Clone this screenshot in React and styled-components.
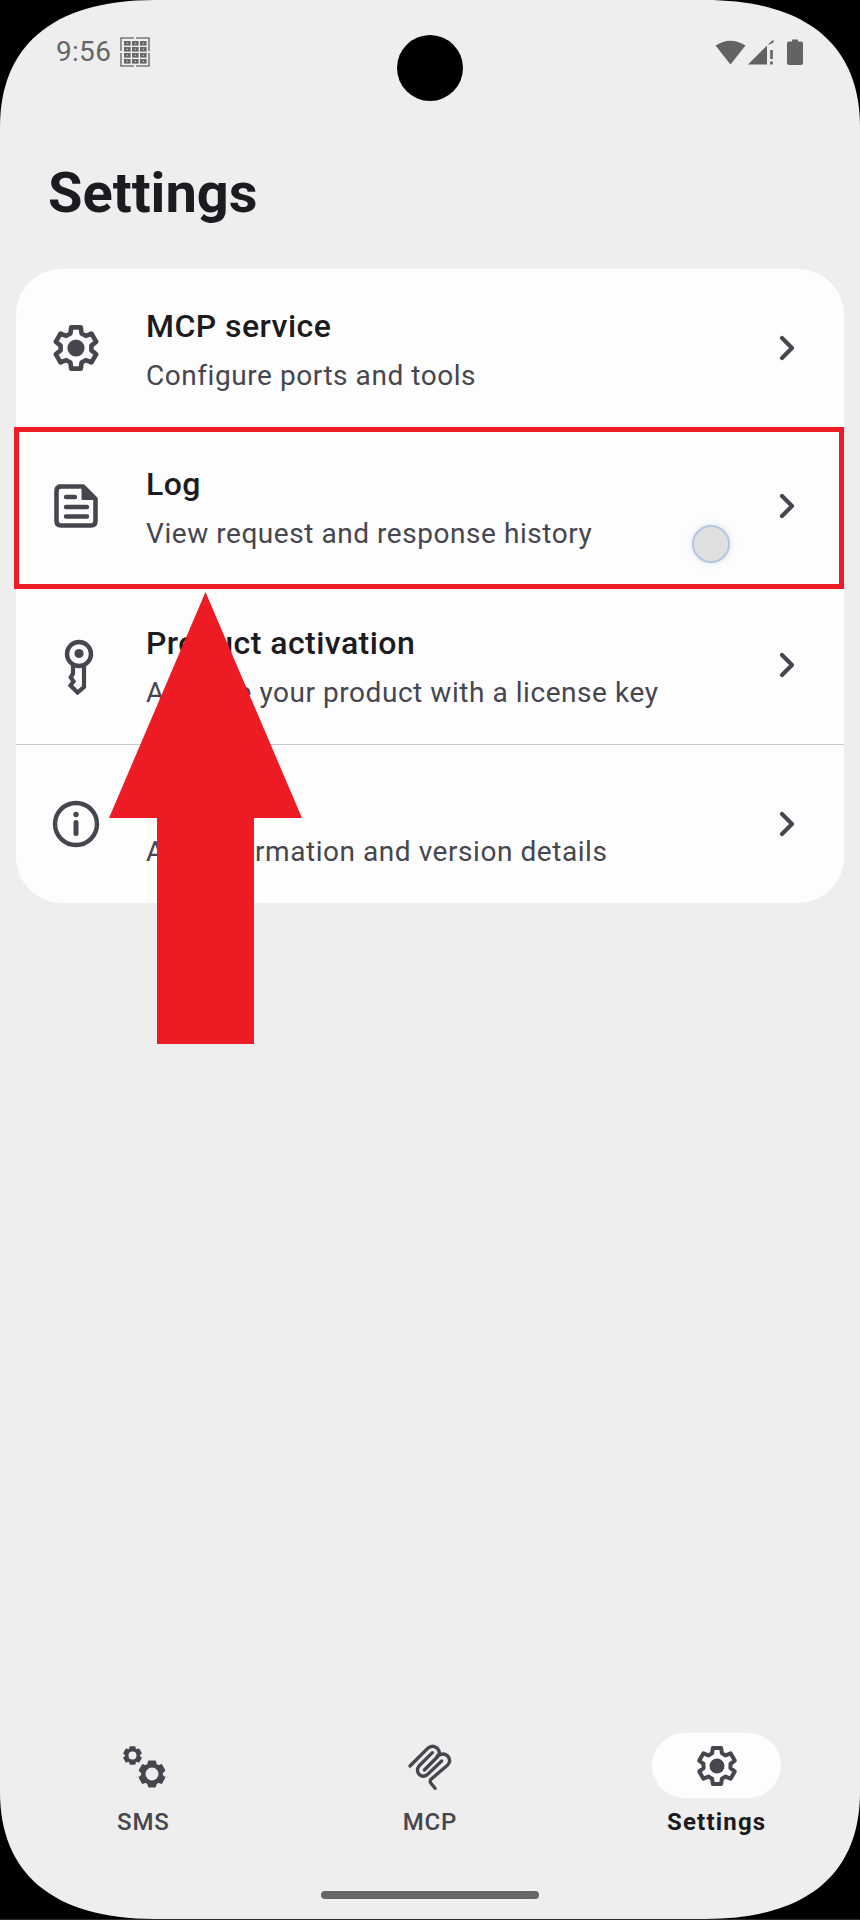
import React from "react";
import styled, {createGlobalStyle} from "styled-components";

const GlobalStyle = createGlobalStyle`
  html, body {
    margin: 0;
    padding: 0;
    background: #000;
  }
`
const Screen = styled.div`
  position: relative;
  width: 860px;
  height: 1920px;
  overflow: hidden;
  background: #000;
  border-bottom: 1px solid #2a2a2a;
  box-sizing: border-box;
  font-family: Roboto, "Liberation Sans", sans-serif;
`
const Display = styled.div`
  display: flex;
  flex-direction: column;
  height: 1919px;
  background: #eeeeee;
  clip-path: path("M0 127C0 48 50 0 155 0H705C810 0 860 48 860 127V1792C860 1871 810 1919 705 1919H155C50 1919 0 1871 0 1792Z");
`
const StatusBar = styled.div`
  display: flex;
  justify-content: space-between;
  height: 67px;
  padding: 37px 57px 0 56px;
`
const StatusLeft = styled.div`
  display: flex;
  align-items: center;
  height: 30px;
  gap: 9px;
`
const Clock = styled.span`
  font-size: 28px;
  line-height: 30px;
  letter-spacing: 0.3px;
  color: #666666;
`
const StatusRight = styled.div`
  display: flex;
  align-items: flex-start;
  height: 30px;
  padding-top: 2px;
  color: #636363;
`
const Title = styled.h1`
  margin: 57px 0 44px 48px;
  font-size: 56px;
  line-height: 64px;
  font-weight: 700;
  color: #1b1b20;
`
const Card = styled.div`
  margin: 0 16px;
  border-radius: 46px;
  background: #fdfdfd;
  overflow: hidden;
`
const Row = styled.div`
  display: grid;
  grid-template-columns: 130px 1fr 115px;
  align-items: center;
  height: 158.5px;
  box-sizing: border-box;
  border-bottom: ${(p) => (p.$last ? "none" : "1.5px solid #c8c8d0")};
`
const IconSlot = styled.div`
  display: flex;
  justify-content: center;
  width: 120px;
  color: #46464f;
`
const RowText = styled.div`
  display: flex;
  flex-direction: column;
  gap: 6px;
  padding-top: 6px;
`
const RowTitle = styled.div`
  font-size: 32px;
  line-height: 44px;
  font-weight: 500;
  letter-spacing: 0.45px;
  color: #1b1b20;
`
const RowSub = styled.div`
  font-size: 28px;
  line-height: 44px;
  letter-spacing: 0.55px;
  color: #46464f;
`
const Chevron = styled.svg`
  justify-self: center;
  color: #46464f;
`
const KeySvg = styled.svg`
  margin: 4px 0 0 6px;
`
const Spacer = styled.div`
  flex: 1;
`
const BottomNav = styled.div`
  display: grid;
  grid-template-columns: repeat(3, 1fr);
`
const NavItem = styled.div`
  display: flex;
  flex-direction: column;
  align-items: center;
  gap: 8px;
`
const NavPill = styled.div`
  display: flex;
  align-items: center;
  justify-content: center;
  width: 129px;
  height: 65px;
  border-radius: 33px;
  background: ${(p) => (p.$active ? "#fdfdfd" : "transparent")};
  color: #46464f;
`
const NavLabel = styled.span`
  font-size: 24px;
  line-height: 32px;
  letter-spacing: ${(p) => (p.$active ? "1.2px" : "0.8px")};
  font-weight: ${(p) => (p.$active ? 700 : 500)};
  color: ${(p) => (p.$active ? "#1b1b20" : "#46464f")};
`
const HomeArea = styled.div`
  display: flex;
  justify-content: center;
  padding: 53px 0 20px;
`
const HomeBar = styled.div`
  width: 218px;
  height: 8px;
  border-radius: 4px;
  background: #666666;
`
const Camera = styled.div`
  position: absolute;
  left: 397px;
  top: 35px;
  width: 66px;
  height: 66px;
  border-radius: 50%;
  background: #000;
`
const Highlight = styled.div`
  position: absolute;
  left: 14px;
  top: 427px;
  width: 830px;
  height: 162px;
  box-sizing: border-box;
  border: 5px solid #ed1c24;
`
const TouchDot = styled.div`
  position: absolute;
  left: 692px;
  top: 525px;
  width: 38px;
  height: 38px;
  box-sizing: border-box;
  border-radius: 50%;
  background: #e0e0e0;
  border: 2px solid #b4c6e0;
  box-shadow: 0 0 6px rgba(120, 140, 170, 0.25);
`
const Arrow = styled.svg`
  position: absolute;
  left: 109px;
  top: 592px;
`

// six tooth outline, tooth up and down
const gearPath = (c, rOut, rIn, aOut = 13, aIn = 21) => {
    const pts = []
    for (let i = 0; i < 6; i++) {
        const a = -90 + i * 60
        ;[[rIn, a - aIn], [rOut, a - aOut], [rOut, a + aOut], [rIn, a + aIn]].forEach(([r, d]) => {
            const t = (d * Math.PI) / 180
            pts.push(`${(c + r * Math.cos(t)).toFixed(2)} ${(c + r * Math.sin(t)).toFixed(2)}`)
        })
    }
    return "M" + pts.join("L") + "Z"
}
const holePath = (c, r) => `M${c - r} ${c}a${r} ${r} 0 1 0 ${2 * r} 0a${r} ${r} 0 1 0 ${-2 * r} 0Z`

const GearIcon = ({size = 48}) => (
    <svg width={size} height={size} viewBox="0 0 48 48">
        <path d={gearPath(24, 21.2, 15.6)} fill="none" stroke="currentColor" strokeWidth="4.6" strokeLinejoin="round"/>
        <circle cx="24" cy="24" r="8.6" fill="currentColor"/>
    </svg>
)

const LogIcon = () => (
    <svg width="44" height="44" viewBox="0 0 44 44">
        <path d="M5 2.5H29L41.5 15V37Q41.5 41.5 37 41.5H7Q2.5 41.5 2.5 37V7Q2.5 2.5 7 2.5Z" fill="none" stroke="currentColor" strokeWidth="4.6" strokeLinejoin="round"/>
        <path d="M28 2.5L41.5 15.5H28Z" fill="currentColor" stroke="currentColor" strokeWidth="1" strokeLinejoin="round"/>
        <path d="M12 13H21M12 23H33M12 32.5H33" fill="none" stroke="currentColor" strokeWidth="4.4" strokeLinecap="round"/>
    </svg>
)

const KeyIcon = () => (
    <KeySvg width="34" height="56" viewBox="0 0 34 56">
        <circle cx="17" cy="15" r="12" fill="none" stroke="currentColor" strokeWidth="4.4"/>
        <circle cx="17" cy="14.5" r="4.6" fill="currentColor"/>
        <path d="M22 26V48L15.5 53.5L8.5 46.5L11.5 42.5L8.8 38.5L11 34.5V26" fill="none" stroke="currentColor" strokeWidth="4.2" strokeLinejoin="miter"/>
    </KeySvg>
)

const InfoIcon = () => (
    <svg width="48" height="48" viewBox="0 0 48 48">
        <circle cx="24" cy="24" r="21" fill="none" stroke="currentColor" strokeWidth="4.4"/>
        <circle cx="24" cy="14.5" r="2.7" fill="currentColor"/>
        <path d="M24 22.5V33.5" stroke="currentColor" strokeWidth="5" strokeLinecap="round"/>
    </svg>
)

const TwoGears = () => (
    <svg width="46" height="46" viewBox="0 0 46 46">
        <g transform="translate(2.5 2.5)">
            <path d={gearPath(10, 8.6, 6.6, 14, 22) + holePath(10, 5)} fill="currentColor" fillRule="evenodd" stroke="currentColor" strokeWidth="2" strokeLinejoin="round"/>
        </g>
        <g transform="translate(17 16)">
            <path d={gearPath(15, 12.8, 10, 14, 22) + holePath(15, 7.5)} fill="currentColor" fillRule="evenodd" stroke="currentColor" strokeWidth="2" strokeLinejoin="round"/>
        </g>
    </svg>
)

// serpentine clip logo, coords taken from a 3x crop
const McpIcon = () => (
    <svg width="70" height="60" viewBox="0 0 210 180">
        <g fill="none" stroke="currentColor" strokeWidth="10" strokeLinecap="round" strokeLinejoin="round">
            <path d="M45 90L98 37Q113 24 127 37Q139 50 127 63L88 102"/>
            <path d="M127 60Q145 48 158 60Q170 73 158 87L108 130Q103 137 108 142L120 157"/>
            <path d="M112 50L72 90Q62 103 73 116Q85 125 97 116L140 75"/>
        </g>
    </svg>
)

const KeypadIcon = () => {
    const cells = []
    for (let r = 0; r < 4; r++) {
        for (let c = 0; c < 3; c++) {
            cells.push(
                <g key={`${r}-${c}`}>
                    <rect x={4 + c * 8} y={4 + r * 6} width="6.6" height="4.6" fill="#666666"/>
                    <rect x={6.6 + c * 8} y={5.6 + r * 6} width="1.4" height="1.4" fill="#b5b5b5"/>
                </g>
            )
        }
    }
    return (
        <svg width="30" height="30" viewBox="0 0 30 30">
            <path d="M14 1H1V14M16 1H29V14M1 16V29H14M29 16V29H16" fill="none" stroke="#7a7a7a" strokeWidth="1.6"/>
            {cells}
        </svg>
    )
}

const WifiIcon = () => (
    <svg width="31" height="26" viewBox="0 0 31 26" style={{marginRight: 2}}>
        <path d="M0.5 6.5Q15.5 -3 30.5 6.5L15.5 25.5Z" fill="currentColor"/>
    </svg>
)

const SignalIcon = () => (
    <svg width="26" height="26" viewBox="0 0 26 26" style={{marginRight: 13}}>
        <path d="M0 25.5L19 6.5V25.5Z" fill="currentColor"/>
        <path d="M20.5 5L25.5 0.5V3.5L20.5 6Z" fill="currentColor"/>
        <path d="M23.5 11V20M23.5 22.5V25.5" stroke="currentColor" strokeWidth="2.6"/>
    </svg>
)

const BatteryIcon = () => (
    <svg width="16" height="26" viewBox="0 0 16 26">
        <path d="M5 0.5H11V2.5H14Q16 2.5 16 4.5V24Q16 26 14 26H2Q0 26 0 24V4.5Q0 2.5 2 2.5H5Z" fill="currentColor"/>
    </svg>
)

const ChevronIcon = () => (
    <Chevron width="16" height="26" viewBox="0 0 16 26">
        <path d="M3 3L13 13L3 23" fill="none" stroke="currentColor" strokeWidth="4.2" strokeLinecap="round" strokeLinejoin="round"/>
    </Chevron>
)

const items = [
    {icon: <GearIcon/>, title: "MCP service", sub: "Configure ports and tools"},
    {icon: <LogIcon/>, title: "Log", sub: "View request and response history"},
    {icon: <KeyIcon/>, title: "Product activation", sub: "Activate your product with a license key"},
    {icon: <InfoIcon/>, title: "About", sub: "App information and version details", last: true},
]

const App = () => {
    return (
        <Screen>
            <GlobalStyle/>
            <Display>
                <StatusBar>
                    <StatusLeft>
                        <Clock>9:56</Clock>
                        <KeypadIcon/>
                    </StatusLeft>
                    <StatusRight>
                        <WifiIcon/>
                        <SignalIcon/>
                        <BatteryIcon/>
                    </StatusRight>
                </StatusBar>
                <Title>Settings</Title>
                <Card>
                    {items.map((it) => (
                        <Row key={it.title} $last={it.last}>
                            <IconSlot>{it.icon}</IconSlot>
                            <RowText>
                                <RowTitle>{it.title}</RowTitle>
                                <RowSub>{it.sub}</RowSub>
                            </RowText>
                            <ChevronIcon/>
                        </Row>
                    ))}
                </Card>
                <Spacer/>
                <BottomNav>
                    <NavItem>
                        <NavPill><TwoGears/></NavPill>
                        <NavLabel>SMS</NavLabel>
                    </NavItem>
                    <NavItem>
                        <NavPill><McpIcon/></NavPill>
                        <NavLabel>MCP</NavLabel>
                    </NavItem>
                    <NavItem>
                        <NavPill $active><GearIcon size={42}/></NavPill>
                        <NavLabel $active>Settings</NavLabel>
                    </NavItem>
                </BottomNav>
                <HomeArea><HomeBar/></HomeArea>
            </Display>
            <Camera/>
            <Highlight/>
            <TouchDot/>
            <Arrow width="193" height="452" viewBox="0 0 193 452">
                <path d="M96.5 0L193 226H145V452H48V226H0Z" fill="#ed1c24"/>
            </Arrow>
        </Screen>
    )
}
export default App;
